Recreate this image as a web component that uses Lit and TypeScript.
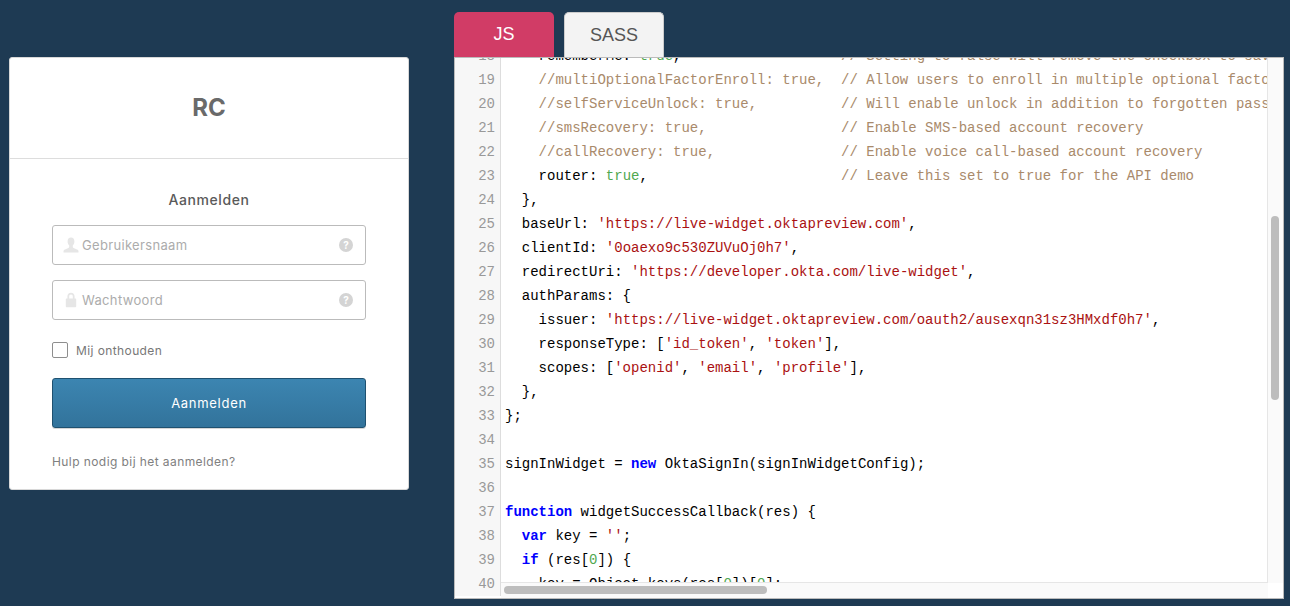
import { LitElement, html, css, svg } from "lit";
import { customElement } from "lit/decorators.js";

const LINES: [number, string][] = [
  [18, "    rememberMe: true,                   // Setting to false will remove the checkbox to save"],
  [19, "    //multiOptionalFactorEnroll: true,  // Allow users to enroll in multiple optional factors"],
  [20, "    //selfServiceUnlock: true,          // Will enable unlock in addition to forgotten password"],
  [21, "    //smsRecovery: true,                // Enable SMS-based account recovery"],
  [22, "    //callRecovery: true,               // Enable voice call-based account recovery"],
  [23, "    router: true,                       // Leave this set to true for the API demo"],
  [24, "  },"],
  [25, "  baseUrl: 'https://live-widget.oktapreview.com',"],
  [26, "  clientId: '0oaexo9c530ZUVuOj0h7',"],
  [27, "  redirectUri: 'https://developer.okta.com/live-widget',"],
  [28, "  authParams: {"],
  [29, "    issuer: 'https://live-widget.oktapreview.com/oauth2/ausexqn31sz3HMxdf0h7',"],
  [30, "    responseType: ['id_token', 'token'],"],
  [31, "    scopes: ['openid', 'email', 'profile'],"],
  [32, "  },"],
  [33, "};"],
  [34, ""],
  [35, "signInWidget = new OktaSignIn(signInWidgetConfig);"],
  [36, ""],
  [37, "function widgetSuccessCallback(res) {"],
  [38, "  var key = '';"],
  [39, "  if (res[0]) {"],
  [40, "    key = Object.keys(res[0])[0];"],
];

function highlight(src: string) {
  const re = /(\/\/.*$)|('[^']*')|\b(var|function|new|if)\b|\b(true|false|\d+)\b/g;
  const out: unknown[] = [];
  let last = 0;
  let m: RegExpExecArray | null;
  while ((m = re.exec(src))) {
    out.push(src.slice(last, m.index));
    const cls = m[1] ? "com" : m[2] ? "str" : m[3] ? "kw" : "num";
    out.push(html`<span class=${cls}>${m[0]}</span>`);
    last = m.index + m[0].length;
  }
  out.push(src.slice(last));
  return out;
}

const personIcon = svg`<svg class="lead" width="16" height="16" viewBox="0 0 16 16"><path fill="#e6e6e6" d="M8 0.5c2.2 0 3.4 1.6 3.4 3.9 0 1.7-.7 3.2-1.6 4.1v1.4c0 .5.3.8.8 1l3.4 1.5c1 .4 1.5 1 1.5 2.1v1H.5v-1c0-1.1.5-1.7 1.5-2.1l3.4-1.5c.5-.2.8-.5.8-1V8.500C5.300 7.600 4.600 6.100 4.600 4.400 4.600 2.100 5.800 .5 8 .5z"/></svg>`;
const lockIcon = svg`<svg class="lead" width="16" height="16" viewBox="0 0 16 16"><path fill="#e6e6e6" d="M8 .8c2.300 0 3.600 1.600 3.600 3.800V6.500h.6c.6 0 1 .4 1 1v6.800c0 .6-.4 1-1 1H3.800c-.6 0-1-.4-1-1V7.500c0-.6.4-1 1-1h.6V4.600C4.400 2.400 5.700.8 8 .8zM8 2.600c-1.200 0-1.800.8-1.800 2v1.900h3.600V4.600c0-1.200-.6-2-1.800-2z"/></svg>`;
const helpIcon = html`<span class="help">?</span>`;

@customElement("app-root")
export class AppRoot extends LitElement {
  static styles = css`
    :host {
      display: block;
      height: 606px;
      overflow: hidden;
      background: #1e3a53;
    }
    .page {
      display: flex;
      align-items: flex-start;
      padding: 12px 6px 0 9px;
      gap: 45px;
    }
    .card {
      flex: none;
      box-sizing: border-box;
      width: 400px;
      height: 433px;
      margin-top: 45px;
      background: #fff;
      border: 1px solid #d8d8d8;
      border-radius: 3px;
      font-family: Inter, "Liberation Sans", sans-serif;
      color: #5e5e5e;
    }
    .brand {
      height: 101px;
      box-sizing: border-box;
      border-bottom: 1px solid #ddd;
      display: flex;
      align-items: center;
      justify-content: center;
      font-size: 24px;
      font-weight: 700;
      color: #6a6a6a;
      padding-bottom: 2px;
    }
    .form {
      padding: 0 42px;
      display: flex;
      flex-direction: column;
    }
    h2 {
      margin: 32px 0 16px;
      height: 18px;
      line-height: 18px;
      font-size: 14px;
      font-weight: 500;
      letter-spacing: 0.6px;
      text-align: center;
      color: #5a5a5a;
    }
    .field {
      box-sizing: border-box;
      height: 40px;
      margin-bottom: 15px;
      border: 1px solid #bbb;
      border-radius: 3px;
      display: flex;
      align-items: center;
      padding: 0 12px 0 10px;
      font-size: 13px;
      letter-spacing: 0.33px;
      color: #acacac;
    }
    .lead {
      flex: none;
      margin-right: 3px;
    }
    .ph {
      flex: 1;
    }
    .help {
      flex: none;
      width: 14px;
      height: 14px;
      border-radius: 50%;
      background: #d4d4d4;
      color: #fff;
      font-size: 10px;
      font-weight: 700;
      letter-spacing: 0;
      line-height: 14px;
      text-align: center;
    }
    .remember {
      display: flex;
      align-items: center;
      height: 16px;
      margin-top: 7px;
      font-size: 12px;
      letter-spacing: 0.4px;
      color: #777;
    }
    .box {
      box-sizing: border-box;
      width: 16px;
      height: 16px;
      margin-right: 8px;
      border: 1px solid #8e8e8e;
      border-radius: 2px;
      background: #fff;
    }
    .submit {
      box-sizing: border-box;
      height: 50px;
      margin-top: 20px;
      border: 1px solid #1f5170;
      border-radius: 3px;
      background: linear-gradient(#3c85b1, #32739b);
      box-shadow: 0 1px 0 #d6d6d6;
      color: #fff;
      display: flex;
      align-items: center;
      justify-content: center;
      font-size: 13px;
      letter-spacing: 0.7px;
    }
    .need {
      margin-top: 26px;
      font-size: 12px;
      line-height: 16px;
      letter-spacing: 0.42px;
      color: #808080;
    }
    .editor {
      flex: 1;
      min-width: 0;
    }
    .tabs {
      display: flex;
      gap: 10px;
      font-family: "Liberation Sans", Arial, sans-serif;
      font-size: 18px;
    }
    .tab {
      box-sizing: border-box;
      width: 100px;
      height: 45px;
      border-radius: 5px 5px 0 0;
      display: flex;
      align-items: center;
      justify-content: center;
    }
    .tab.on {
      background: #d13c66;
      color: #fff;
    }
    .tab.off {
      background: #f3f3f3;
      color: #555;
      border: 1px solid #ccc;
      border-bottom: none;
    }
    .panel {
      position: relative;
      box-sizing: border-box;
      height: 542px;
      background: #fff;
      border: 1px solid #bbb;
      overflow: hidden;
      font-family: "Liberation Mono", "Courier New", monospace;
      font-size: 14px;
      line-height: 24px;
    }
    .lines {
      margin-top: -14px;
    }
    .row {
      display: flex;
      height: 24px;
      white-space: pre;
      color: #000;
    }
    .num-col {
      flex: none;
      box-sizing: border-box;
      width: 46px;
      padding-right: 5px;
      background: #f7f7f7;
      border-right: 1px solid #ddd;
      color: #999;
      text-align: right;
    }
    .src {
      padding-left: 4px;
    }
    .com { color: #a98a6b; }
    .str { color: #a11; }
    .kw { color: #00f; font-weight: 700; }
    .num { color: #50a850; }
    .vbar {
      position: absolute;
      top: 0;
      right: 0;
      bottom: 0;
      width: 15px;
      background: #fafafa;
      border-left: 1px solid #e6e6e6;
    }
    .vthumb {
      position: absolute;
      top: 158px;
      left: 3px;
      width: 8px;
      height: 184px;
      border-radius: 4px;
      background: #bdbdbd;
    }
    .hbar {
      position: absolute;
      left: 46px;
      right: 15px;
      bottom: 0;
      height: 15px;
      background: #fafafa;
      border-top: 1px solid #e6e6e6;
    }
    .hthumb {
      position: absolute;
      top: 3px;
      left: 3px;
      width: 263px;
      height: 8px;
      border-radius: 4px;
      background: #bdbdbd;
    }
    .corner {
      position: absolute;
      right: 0;
      bottom: 0;
      width: 15px;
      height: 15px;
      background: #fff;
    }
  `;

  render() {
    return html`
      <div class="page">
        <section class="card">
          <div class="brand">RC</div>
          <div class="form">
            <h2>Aanmelden</h2>
            <div class="field">${personIcon}<span class="ph">Gebruikersnaam</span>${helpIcon}</div>
            <div class="field">${lockIcon}<span class="ph">Wachtwoord</span>${helpIcon}</div>
            <div class="remember"><span class="box"></span>Mij onthouden</div>
            <div class="submit">Aanmelden</div>
            <div class="need">Hulp nodig bij het aanmelden?</div>
          </div>
        </section>
        <section class="editor">
          <div class="tabs">
            <div class="tab on">JS</div>
            <div class="tab off">SASS</div>
          </div>
          <div class="panel">
            <div class="lines">
              ${LINES.map(
                ([n, s]) => html`<div class="row"><span class="num-col">${n}</span><span class="src">${highlight(s)}</span></div>`
              )}
            </div>
            <div class="vbar"><div class="vthumb"></div></div>
            <div class="hbar"><div class="hthumb"></div></div>
            <div class="corner"></div>
          </div>
        </section>
      </div>
    `;
  }
}
